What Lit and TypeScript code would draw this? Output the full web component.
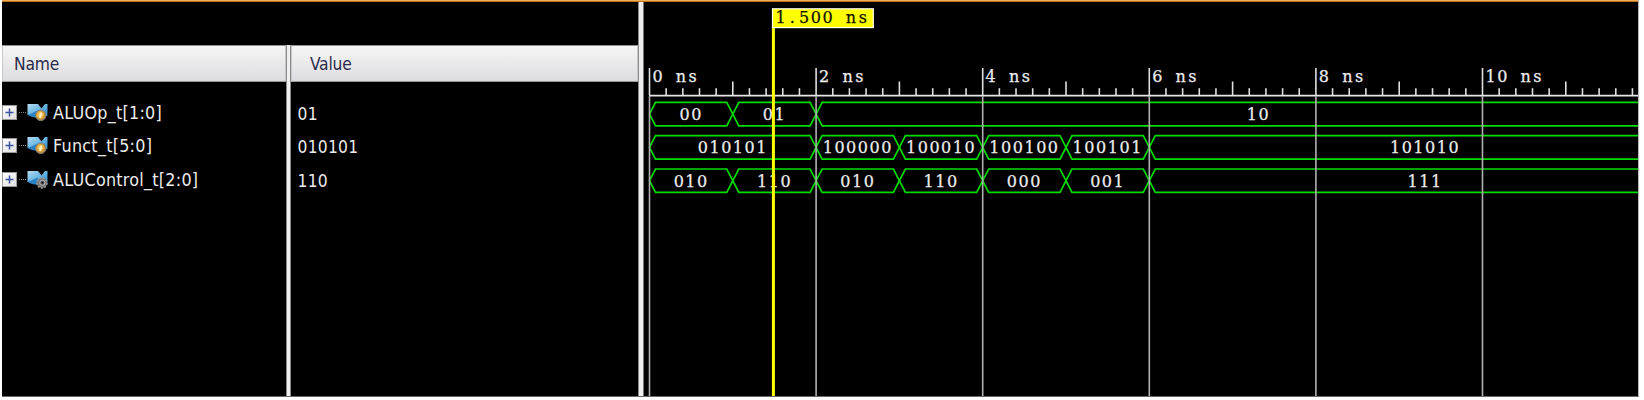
import { LitElement, html, svg, css } from "lit";
import { customElement } from "lit/decorators.js";

interface Segment { from: number; to: number; value: string; }
interface Signal { name: string; value: string; kind: "in" | "out"; wave: Segment[]; }

const SIGNALS: Signal[] = [
  { name: "ALUOp_t[1:0]", value: "01", kind: "in", wave: [
    { from: 0, to: 1, value: "00" }, { from: 1, to: 2, value: "01" }, { from: 2, to: 12.62, value: "10" } ] },
  { name: "Funct_t[5:0]", value: "010101", kind: "in", wave: [
    { from: 0, to: 2, value: "010101" }, { from: 2, to: 3, value: "100000" }, { from: 3, to: 4, value: "100010" },
    { from: 4, to: 5, value: "100100" }, { from: 5, to: 6, value: "100101" }, { from: 6, to: 12.62, value: "101010" } ] },
  { name: "ALUControl_t[2:0]", value: "110", kind: "out", wave: [
    { from: 0, to: 1, value: "010" }, { from: 1, to: 2, value: "110" }, { from: 2, to: 3, value: "010" },
    { from: 3, to: 4, value: "110" }, { from: 4, to: 5, value: "000" }, { from: 5, to: 6, value: "001" },
    { from: 6, to: 12.62, value: "111" } ] },
];

const ORIGIN = 5.5;
const NS = 83.3;
const PITCH = 11.72;
const at = (t: number) => ORIGIN + t * NS;
const cells = (text: string, first: number) => [...text].map((_, i) => (first + i * PITCH).toFixed(2)).join(" ");

@customElement("wave-view")
export class WaveView extends LitElement {
  static styles = css`
    :host { display: block; }
    svg { display: block; }
    .mono { font-family: "DejaVu Serif", serif; font-size: 16px; text-anchor: middle; white-space: pre; fill: #ececec; stroke: #ececec; stroke-width: 0.25; }
    .flag { fill: #111100; stroke: #111100; }
    .bus { fill: none; stroke: #00dc00; stroke-width: 1.7; }
    .tick { stroke: #e0e0e0; stroke-width: 1.6; }
    .axis { stroke: #e6e6e6; stroke-width: 1.8; }
    .grid { stroke: #b0b0b0; stroke-width: 1.6; }
  `;

  private segment(s: Segment, top: number) {
    const a = at(s.from), b = at(s.to), bottom = top + 23.4, mid = top + 11.7;
    const first = (a + b) / 2 - 0.7 - ((s.value.length - 1) * PITCH) / 2;
    return svg`
      <path class="bus" d="M${a} ${mid}L${a + 6} ${top}H${b - 6}L${b} ${mid}L${b - 6} ${bottom}H${a + 6}Z"></path>
      <text class="mono" x=${cells(s.value, first)} y=${top + 17.7}>${s.value}</text>`;
  }

  render() {
    const ticks = Array.from({ length: 60 }, (_, i) => i);
    const majors = [0, 2, 4, 6, 8, 10];
    return html`<svg width="994" height="394" viewBox="0 2 994 394">
      ${ticks.map((i) => svg`<line class="tick" x1=${at(i / 5)} x2=${at(i / 5)} y1=${i % 10 === 0 ? 68 : i % 5 === 0 ? 81.5 : 88.2} y2="95"></line>`)}
      <line class="axis" x1="5" x2="994" y1="95.6" y2="95.6"></line>
      ${SIGNALS.map((sig, r) => sig.wave.map((s) => this.segment(s, 102.4 + r * 33.3)))}
      ${majors.map((t) => svg`
        <line class="grid" x1=${at(t)} x2=${at(t)} y1="96" y2="396"></line>
        <text class="mono" x=${cells(`${t} ns`, at(t) + 8)} y="81.6">${t} ns</text>`)}
      <rect x="127.9" y="26" width="3" height="370" fill="#ffff00"></rect>
      <rect x="128.5" y="8.8" width="100.8" height="18.8" fill="#ffff00" stroke="#fffff0" stroke-width="1.2"></rect>
      <text class="mono flag" x=${cells("1.500 ns", 136.7)} y="23">1.500 ns</text>
    </svg>`;
  }
}

@customElement("signal-icon")
export class SignalIcon extends LitElement {
  static properties = { kind: {} };
  declare kind: string;
  static styles = css`:host { display: block; width: 21px; height: 19px; } svg { display: block; }`;
  render() {
    return html`<svg width="21" height="19" viewBox="0 0 21 19">
      <defs>
        <linearGradient id="b" x1="0" y1="0" x2="1" y2="1"><stop offset="0" stop-color="#b9dcf0"></stop><stop offset=".5" stop-color="#6ab8e4"></stop><stop offset="1" stop-color="#2581c4"></stop></linearGradient>
        <radialGradient id="y" cx=".45" cy=".45"><stop offset="0" stop-color="#fff2b8"></stop><stop offset=".6" stop-color="#e6ab35"></stop><stop offset="1" stop-color="#a58348"></stop></radialGradient>
      </defs>
      <path d="M0.5 1H11L14.5 5.5L18 1H20.5V13H8L0.5 12Z" fill="url(#b)"></path>
      <path d="M0.5 12L11 7.5V15L5 14Z" fill="#2b83c6"></path>
      ${this.kind === "in"
        ? svg`<circle cx="13.8" cy="12.4" r="5.2" fill="url(#y)" stroke="#8d8074"></circle><path d="M14.5 9.5L13 15" stroke="#fff3cc" stroke-width="1.8"></path>`
        : svg`<circle cx="15" cy="13" r="5" fill="#777" stroke="#999" stroke-dasharray="2 1.4" stroke-width="1.6"></circle><circle cx="15.4" cy="12.7" r="2.6" fill="#555" stroke="#bbb"></circle><circle cx="15.4" cy="12.7" r="1" fill="#111"></circle>`}
    </svg>`;
  }
}

@customElement("app-root")
export class AppRoot extends LitElement {
  static styles = css`
    :host { display: block; width: 1644px; height: 400px; background: #fff; overflow: hidden; }
    .window { box-sizing: border-box; height: 397px; margin: 0 5px 0 2px; border-right: 1px solid #b8b8b8; border-bottom: 1px solid #686868; background: #000; }
    .accent { height: 2px; background: linear-gradient(#f9ab52 50%, #b87528 50%); }
    .panes { display: flex; height: 394px; }
    .names { width: 284px; }
    .values { width: 347px; }
    .names, .values { flex: none; padding-top: 43px; box-sizing: border-box; }
    .sash { flex: none; box-sizing: border-box; width: 5px; margin-top: 43px; background: #f0f0f0; border-left: 1px solid #8a8a8a; border-right: 1px solid #8a8a8a; }
    .split { flex: none; box-sizing: border-box; width: 6px; background: #eee; border-left: 1px solid #8a8a8a; border-right: 1px solid #777; }
    .head { box-sizing: border-box; height: 37px; border: 1px solid #c8c8c8; border-top: 1px solid #8f8f8f; border-bottom: 1px solid #999; background: linear-gradient(#f5f5f5, #dddde0); color: #2b2b4b; line-height: 36px; padding-left: 11px; letter-spacing: -0.2px; }
    .values .head { padding-left: 18px; }
    .head, .label, .val { font-family: "DejaVu Sans Condensed", "DejaVu Sans", sans-serif; font-stretch: condensed; font-size: 17.3px; white-space: nowrap; }
    .list { padding-top: 14px; }
    .row { display: flex; align-items: center; height: 33.3px; color: #ececec; }
    .box { box-sizing: border-box; width: 15px; height: 15px; background: linear-gradient(135deg, #fff, #ddd); border: 1px solid #999; }
    .box svg, .dots { display: block; }
    .dots { width: 7px; margin: 0 1px 0 2px; border-top: 1px dotted #888; }
    .label { margin-left: 5px; font-size: 17.8px; letter-spacing: 0.26px; }
    .val { padding: 3px 0 0 6.5px; letter-spacing: 0.25px; }
  `;

  render() {
    return html`<div class="window">
      <div class="accent"></div>
      <div class="panes">
        <div class="names">
          <div class="head">Name</div>
          <div class="list">${SIGNALS.map((s) => html`<div class="row">
            <span class="box"><svg width="13" height="13"><path d="M2.5 6.5H10.5M6.5 2.5V10.5" stroke="#3b52a0" stroke-width="1.5"></path></svg></span>
            <span class="dots"></span>
            <signal-icon .kind=${s.kind}></signal-icon>
            <span class="label">${s.name}</span>
          </div>`)}</div>
        </div>
        <div class="sash"></div>
        <div class="values">
          <div class="head">Value</div>
          <div class="list">${SIGNALS.map((s) => html`<div class="row"><span class="val">${s.value}</span></div>`)}</div>
        </div>
        <div class="split"></div>
        <wave-view></wave-view>
      </div>
    </div>`;
  }
}
